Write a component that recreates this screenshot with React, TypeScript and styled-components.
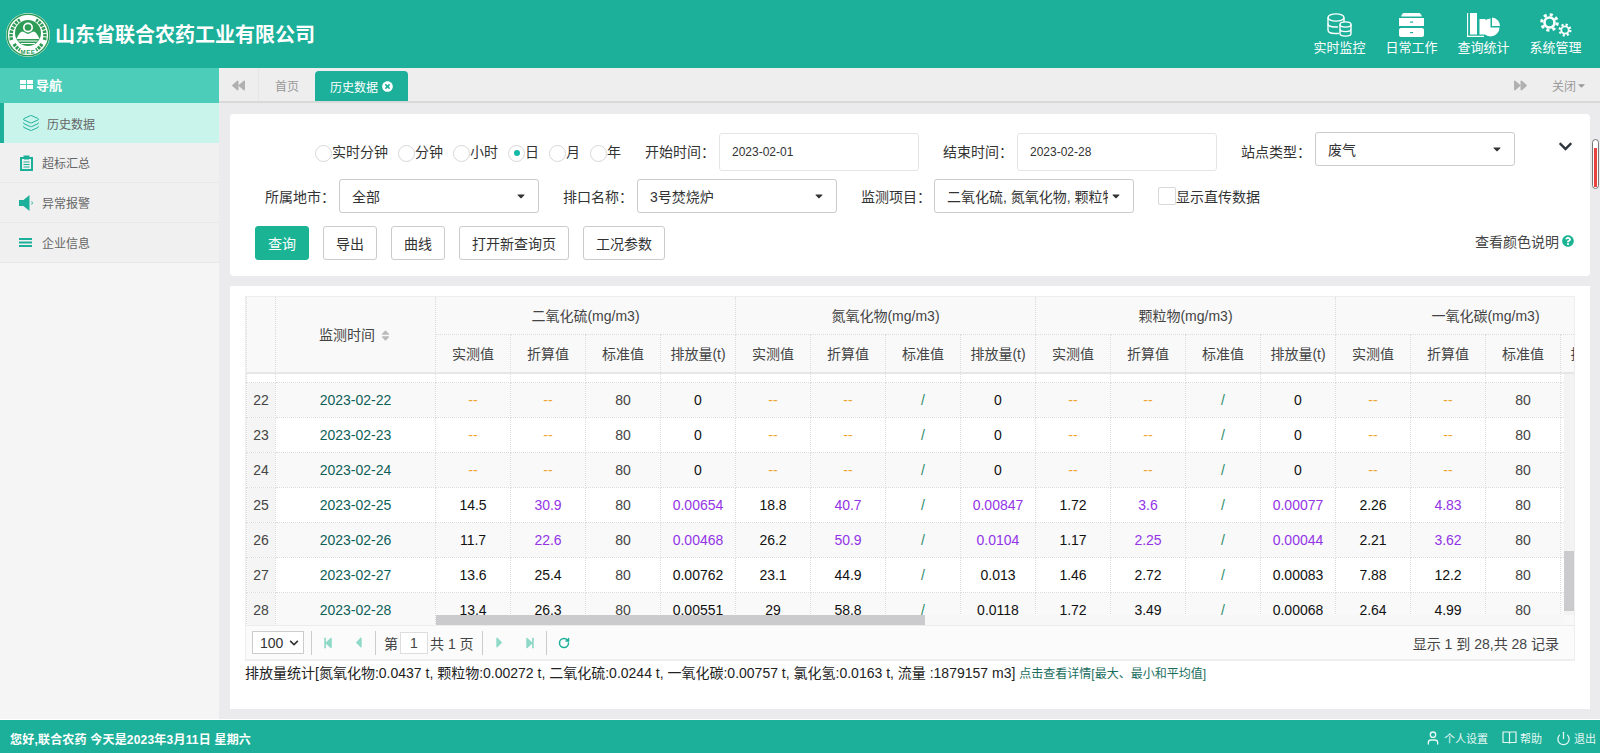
import React from 'react';
import styled, { createGlobalStyle } from 'styled-components';
import { FaBackward, FaForward, FaTimesCircle, FaCaretDown, FaChevronDown, FaQuestionCircle, FaSort, FaStepBackward, FaStepForward, FaCaretLeft, FaCaretRight } from 'react-icons/fa';
import { Layers, User, Power, RotateCw } from 'lucide-react';

const teal = '#1cb09a';
const green = '#2e9b57';
const FONT = '"Liberation Sans", "Noto Sans CJK SC", sans-serif';

const Global = createGlobalStyle`
  html, body { margin: 0; padding: 0; height: 100%; overflow: hidden; background: #ebebed; }
  body { font-family: ${FONT}; font-size: 14px; color: #333; }
  #root { height: 753px; }
  * { box-sizing: border-box; }
`;

const Page = styled.div`
  height: 753px; display: flex; flex-direction: column; position: relative;
`;
const Header = styled.header`
  height: 68px; flex: none; background: ${teal}; display: flex; align-items: center; padding: 0 18px 0 6px; color: #fff;
`;
const LogoWrap = styled.div`width: 44px; height: 44px; margin-right: 5px; margin-top: 1px;`;
const Title = styled.h1`margin: 2px 0 0; font-size: 20px; font-weight: 700; flex: 1; color: #fff; line-height: 24px;`;
const TopNav = styled.nav`display: flex; gap: 19px; margin-top: 2px;`;
const TopItem = styled.div`
  width: 53px; display: flex; flex-direction: column; align-items: center; font-size: 13px; line-height: 18px; white-space: nowrap; gap: 2px;
  svg { display: block; height: 24px; }
`;
const Body = styled.div`flex: 1; display: flex; min-height: 0;`;
const Side = styled.aside`width: 219px; flex: none; background: #f5f5f5;`;
const SideHead = styled.div`
  height: 35px; background: #4ccdb9; color: #fff; font-weight: 700; font-size: 13px; display: flex; align-items: center; padding: 0 0 2px 20px; gap: 3px;
`;
const SideItem = styled.div<{ $active?: boolean }>`
  height: 40px; display: flex; align-items: center; font-size: 12px; color: #666;
  background: ${p => (p.$active ? '#c9f4ec' : '#f0f0f0')};
  border-left: ${p => (p.$active ? `4px solid ${teal}` : 'none')};
  border-bottom: ${p => (p.$active ? 'none' : '1px solid #e8e8e8')};
  padding-left: ${p => (p.$active ? 18 : 19)}px; gap: ${p => (p.$active ? 7 : 8)}px;
  svg { color: ${teal}; flex: none; }
`;
const Main = styled.main`flex: 1; min-width: 0; display: flex; flex-direction: column;`;
const TabBar = styled.div`
  height: 35px; flex: none; background: #eeeeee; border-bottom: 2px solid #d9d9d9; display: flex; align-items: flex-end; color: #999; font-size: 12px;
`;
const TabArrow = styled.div<{ $end?: boolean }>`
  width: 40px; height: 33px; display: flex; align-items: center; justify-content: center; color: #b0b0b0; padding-top: 2px;
  border-right: ${p => (p.$end ? 'none' : '1px solid #e6e6e6')};
`;
const TabPlain = styled.div`width: 56px; height: 33px; display: flex; align-items: center; justify-content: center; font-size: 12px; color: #999; padding-top: 2px;`;
const TabActive = styled.div`
  width: 93px; height: 30px; background: ${teal}; color: #fff; border-radius: 4px 4px 0 0; display: flex; align-items: center; justify-content: center; gap: 4px;
`;
const TabGap = styled.div`flex: 1;`;
const CloseMenu = styled.div`width: 60px; height: 33px; display: flex; align-items: center; color: #999; padding: 2px 0 0 12px;`;
const Content = styled.div`flex: 1; padding: 11px 10px 10px 11px; display: flex; flex-direction: column; gap: 10px; min-height: 0;`;
const FilterCard = styled.section`
  height: 162px; flex: none; background: #fff; border-radius: 4px; position: relative; padding: 19px 25px 0 25px;
`;
const Row = styled.div`display: flex; align-items: center;`;
const Row1 = styled(Row)`height: 38px; padding-left: 60px;`;
const Row2 = styled(Row)`height: 34px; margin-top: 8px; padding-left: 10px;`;
const Row3 = styled(Row)`height: 34px; margin-top: 13px; gap: 14px;`;
const RadioLabel = styled.label`display: flex; align-items: center; font-size: 14px; margin: -3px 10px 0 0; color: #333; height: 20px;`;
const RadioDot = styled.span<{ $on?: boolean }>`
  width: 17px; height: 17px; border-radius: 50%; border: 1px solid #d8d8d8; background: #fff; display: flex; align-items: center; justify-content: center; flex: none; margin-top: 5px;
  &::after { content: ''; width: 6px; height: 6px; border-radius: 50%; background: ${p => (p.$on ? '#16b8a8' : 'transparent')}; }
`;
const FieldLabel = styled.span<{ $ml?: number; $w?: number; $up?: boolean }>`
  font-size: 14px; color: #333; white-space: nowrap; width: ${p => p.$w ?? 74}px; flex: none; margin-left: ${p => p.$ml ?? 0}px;
  margin-top: ${p => (p.$up ? -3 : 0)}px;
`;
const DateInput = styled.div`
  width: 200px; height: 38px; border: 1px solid #e5e5e5; border-radius: 3px; display: flex; align-items: center; padding-left: 12px; font-size: 12px; color: #333; flex: none;
`;
const Select = styled.div<{ $raised?: boolean }>`
  width: 200px; height: 34px; border: 1px solid #ccc; border-radius: 3px; display: flex; align-items: center; padding: 0 12px; font-size: 14px; color: #333; flex: none; white-space: nowrap; overflow: hidden;
  margin-bottom: ${p => (p.$raised ? 6 : 0)}px;
  svg { flex: none; margin-right: -1px; color: #333; }
  span { overflow: hidden; flex: 1; min-width: 0; margin-right: 2px; }
`;
const Check = styled.span`width: 18px; height: 18px; border: 1px solid #d8d8d8; border-radius: 2px; background: #fff; flex: none; margin-left: 24px;`;
const Btn = styled.button<{ $primary?: boolean; $w: number }>`
  width: ${p => p.$w}px; height: 34px; border-radius: 3px; font-family: ${FONT}; font-size: 14px; padding: 0; cursor: pointer;
  background: ${p => (p.$primary ? '#1ab394' : '#fff')}; color: ${p => (p.$primary ? '#fff' : '#333')}; border: 1px solid ${p => (p.$primary ? '#1ab394' : '#ccc')};
`;
const ColorNote = styled.div`
  margin-left: auto; font-size: 14px; color: #444; display: flex; align-items: center; gap: 3px; margin-right: -9px; margin-top: -4px;
  svg { color: #1ab394; }
`;
const Collapse = styled.div`position: absolute; right: 17px; top: 25px; color: #2f3640; line-height: 0;`;
const TableCard = styled.section`flex: 1; background: #fff; padding: 10px 15px 0 15px; min-height: 0;`;
const Grid = styled.div`width: 1330px; border: 1px solid #eeeeee; border-bottom: none; overflow: hidden; position: relative;`;
const HeadBox = styled.div`background: #f9f9f9; border-bottom: 2px solid #e6e6e6; overflow: hidden; height: 77px;`;
const DataTable = styled.table`
  border-collapse: collapse; table-layout: fixed; width: 1389px; font-size: 14px;
  th, td { padding: 0; text-align: center; border: 1px dotted #dcdcdc; white-space: nowrap; overflow: hidden; }
  th { font-weight: 400; color: #444; background: #f9f9f9; }
`;
const HeadTop = styled.tr`height: 37px; th { height: 37px; border-top: none; }`;
const HeadSub = styled.tr`height: 38px; th { height: 38px; border-bottom: none; }`;
const BodyBox = styled.div`height: 251px; overflow: hidden; position: relative; background: #fff;`;
const Tr = styled.tr<{ $alt?: boolean }>`
  height: 35px; background: ${p => (p.$alt ? '#f9f9f9' : '#fff')};
`;
const Spacer = styled.tr`height: 8px; background: #fff; td { height: 8px; border-top: none; }`;
const NumCell = styled.td`background: #f5f5f5; color: #444;`;
const DateCell = styled.td`color: #0e5f58;`;
const Cell = styled.td<{ $c?: string }>`color: ${p => p.$c ?? '#111'};`;
const HTrack = styled.div`position: absolute; left: 190px; right: 10px; bottom: 0; height: 10px; background: #f7f7f7;`;
const HThumb = styled.div`width: 489px; height: 10px; background: #cbcbcd;`;
const VTrack = styled.div`position: absolute; top: 0; right: 0; bottom: 10px; width: 10px; background: #f3f3f3; padding-top: 177px;`;
const VThumb = styled.div`width: 10px; height: 60px; background: #cbcbcd;`;
const Pager = styled.div`
  height: 36px; background: #fbfbfb; border-top: 1px solid #ececec; border-bottom: 2px solid #eeeeee; display: flex; align-items: center; padding: 0 15px 0 6px; font-size: 14px; color: #444;
`;
const PageSize = styled.div`
  width: 52px; height: 23px; border: 1px solid #ccc; background: #fff; display: flex; align-items: center; justify-content: space-between; padding: 0 4px 0 7px; font-size: 14px; color: #333; margin-right: 5px; flex: none;
`;
const Sep = styled.span`width: 1px; height: 24px; background: #ccc; margin: 0 1.5px; flex: none;`;
const PagerBtn = styled.span`
  width: 30px; display: flex; justify-content: center; color: #8fd9c9; flex: none;
`;
const PageText = styled.span`white-space: nowrap; display: flex; align-items: center; gap: 2px; margin: 0 7px;`;
const PageInput = styled.span`width: 28px; height: 22px; border: 1px solid #ddd; background: #fff; display: inline-flex; align-items: center; justify-content: center;`;
const PagerInfo = styled.span`margin-left: auto; font-size: 14px; color: #444;`;
const Stats = styled.div`font-size: 14px; color: #222; line-height: 20px; margin-top: 2px; white-space: nowrap; display: flex; align-items: baseline; gap: 4px;`;
const StatsLink = styled.span`font-size: 12px; color: #1a6e5e;`;
const Footer = styled.footer`
  height: 34px; flex: none; background: ${teal}; border-top: 1px solid #fff; color: #fff; display: flex; align-items: center; padding: 3px 4px 0 10px; font-size: 11px;
`;
const Greeting = styled.span`font-weight: 700; flex: 1; font-size: 12px; letter-spacing: .2px;`;
const FootLink = styled.span`display: flex; align-items: center; gap: 3px; margin-left: 14px; color: #e6f7f4;`;
const PageBar = styled.div`
  position: absolute; left: 1592px; top: 139px; width: 7px; height: 50px; border: 1.5px solid #777; border-radius: 4px; background: #fff; padding: 8px 1px 1px;
  &::after { content: ''; display: block; height: 100%; background: #e8423f; }
`;

const Logo = () => (
  <svg viewBox="0 0 44 44" width="44" height="44">
    <circle cx="22" cy="22" r="22" fill="#fff" />
    <circle cx="22" cy="22" r="20.800" fill="none" stroke={green} strokeWidth="1.500" />
    <path d="M5.500 27C3.500 18 8 10 14 7M38.500 27C40.500 18 36 10 30 7M8 31c2 3 4 5 6 6M36 31c-2 3-4 5-6 6" fill="none" stroke={green} strokeWidth="3.500" strokeDasharray="2.500 1" />
    <circle cx="22" cy="20" r="13" fill={green} />
    <circle cx="22" cy="14.500" r="5" fill="#fff" />
    <circle cx="22" cy="14.500" r="3.300" fill={green} />
    <path d="M10.500 26c2-5 4-7.500 6-7.500 2 0 3.500 2.500 5.500 2.500s3.500-2.500 5.500-2.500c2 0 4 2.500 6 7.500z" fill="#fff" />
    <path d="M12.500 28h19M15 30.500h14" stroke="#fff" strokeWidth="1" />
    <text x="22" y="41" textAnchor="middle" fontSize="6" fontWeight="700" fill={green} fontFamily={FONT} letterSpacing="0.600">MEE</text>
  </svg>
);

const NavGrid = () => (
  <svg width="13" height="9" viewBox="0 0 13 9" fill="#fff">
    <rect x="0" y="0" width="6" height="4" /><rect x="7" y="0" width="6" height="4" />
    <rect x="0" y="5" width="6" height="4" /><rect x="7" y="5" width="6" height="4" />
  </svg>
);

const DbIcon = () => (
  <svg viewBox="0 0 25 24" width="25" height="24" fill="none" stroke="#fff" strokeWidth="1.400">
    <path d="M12 20.500H8c-4 0-7-1.400-7-3.500V4.500" />
    <ellipse cx="9" cy="4.500" rx="8" ry="3.600" />
    <path d="M17 4.500V9M1 10.500c0 2 3 3.500 7 3.500h3" />
    <ellipse cx="18.500" cy="11.500" rx="5.500" ry="2.600" />
    <path d="M13 11.500V20.500c0 1.500 2.500 2.600 5.500 2.600s5.500-1.100 5.500-2.600V11.500M13 16c0 1.500 2.500 2.600 5.500 2.600s5.500-1.100 5.500-2.600" />
  </svg>
);
const DrawerIcon = () => (
  <svg viewBox="0 0 25 24" width="25" height="24">
    <path d="M5 0h15c1.200 0 2.400 1.300 2.800 3.500H2.200C2.600 1.300 3.800 0 5 0z" fill="#fff" />
    <path d="M0 5h25v8H0zM2 15h21c1.100 0 2 .9 2 2v5c0 1.100-.9 2-2 2H2c-1.100 0-2-.9-2-2v-5c0-1.100.9-2 2-2z" fill="#fff" />
    <rect x="11" y="8.500" width="3" height="1.200" fill={teal} /><rect x="11" y="19" width="3" height="1.200" fill={teal} />
  </svg>
);
const ChartIcon = () => (
  <svg viewBox="0 0 33 24" width="33" height="24">
    <path d="M.6 0v23.400H17" fill="none" stroke="#fff" strokeWidth="1.100" />
    <rect x="3" y="0" width="7" height="21.500" fill="#fff" />
    <rect x="12.500" y="6" width="6" height="15.500" fill="#fff" />
    <path d="M23.500 5.500V14.500h9A9 9 0 1 1 23.500 5.500z" fill="#fff" />
    <path d="M25 4.500a8.500 8.500 0 0 1 8 8.500h-8z" fill="#fff" />
  </svg>
);
const Gear = ({ cx, cy, ring, w, teeth, tw }: { cx: number; cy: number; ring: number; w: number; teeth: number; tw: number }) => {
  const seg = (2 * Math.PI * teeth) / 8;
  return (
    <g fill="none" stroke="#fff">
      <circle cx={cx} cy={cy} r={ring} strokeWidth={w} />
      <circle cx={cx} cy={cy} r={teeth} strokeWidth={tw} strokeDasharray={`${seg * 0.5} ${seg * 0.5}`} />
    </g>
  );
};
const GearsIcon = () => (
  <svg viewBox="0 0 32 24" width="32" height="24">
    <Gear cx={9.500} cy={9.500} ring={5} w={2.600} teeth={7.800} tw={3} />
    <Gear cx={25} cy={17} ring={3.700} w={1.800} teeth={5.400} tw={2.200} />
  </svg>
);
const Clip = () => (
  <svg width="15" height="16" viewBox="0 0 15 16">
    <path d="M1 2h3.500V.5h6V2H14v14H1z" fill={teal} />
    <path d="M3 4h9v10H3z" fill="#f0f0f0" />
    <path d="M5 1.500h5v3H5z" fill={teal} />
    <path d="M4.500 7h6M4.500 9.500h6M4.500 12h6" stroke={teal} strokeWidth="1" />
  </svg>
);
const Horn = () => (
  <svg width="15" height="16" viewBox="0 0 15 16">
    <path d="M0 5h4.500L10.500 0v16L4.500 11H0z" fill={teal} />
    <path d="M12.700 6.500c.8 1 .8 2 0 3" fill="none" stroke={teal} strokeWidth="1" />
  </svg>
);
const Lines = () => (
  <svg width="15" height="9" viewBox="0 0 15 9" fill={teal}>
    <rect x="0" y="0" width="13" height="2" /><rect x="0" y="3.500" width="13" height="2" /><rect x="0" y="7" width="13" height="2" />
  </svg>
);
const Book = () => (
  <svg width="15" height="14" viewBox="0 0 15 14" fill="none" stroke="#e6f7f4" strokeWidth="1.200">
    <path d="M1 1h5.500c.6 0 1 .3 1 1 0-.7.4-1 1-1H14v10.500H8.500c-.6 0-1 .3-1 1 0-.7-.4-1-1-1H1zM7.500 2v10" />
  </svg>
);

type C = [string, string?];
const P = '#9334e6';
const D = '#f0a52e';
const dash: C = ['--', D];
const G: C = ['/', '#2e8b6b'];
const S: C = ['80', '#444'];
const blank = (): C[] => [dash, dash, S, ['0'], dash, dash, G, ['0'], dash, dash, G, ['0'], dash, dash, S, ['']];
const rows: { n: number; date: string; cells: C[] }[] = [
  { n: 22, date: '2023-02-22', cells: blank() },
  { n: 23, date: '2023-02-23', cells: blank() },
  { n: 24, date: '2023-02-24', cells: blank() },
  { n: 25, date: '2023-02-25', cells: [['14.5'], ['30.9', P], S, ['0.00654', P], ['18.8'], ['40.7', P], G, ['0.00847', P], ['1.72'], ['3.6', P], G, ['0.00077', P], ['2.26'], ['4.83', P], S, ['']] },
  { n: 26, date: '2023-02-26', cells: [['11.7'], ['22.6', P], S, ['0.00468', P], ['26.2'], ['50.9', P], G, ['0.0104', P], ['1.17'], ['2.25', P], G, ['0.00044', P], ['2.21'], ['3.62', P], S, ['']] },
  { n: 27, date: '2023-02-27', cells: [['13.6'], ['25.4'], S, ['0.00762'], ['23.1'], ['44.9'], G, ['0.013'], ['1.46'], ['2.72'], G, ['0.00083'], ['7.88'], ['12.2'], S, ['']] },
  { n: 28, date: '2023-02-28', cells: [['13.4'], ['26.3'], S, ['0.00551'], ['29'], ['58.8'], G, ['0.0118'], ['1.72'], ['3.49'], G, ['0.00068'], ['2.64'], ['4.99'], S, ['']] },
];
const groups = ['二氧化硫(mg/m3)', '氮氧化物(mg/m3)', '颗粒物(mg/m3)', '一氧化碳(mg/m3)'];
const subs = ['实测值', '折算值', '标准值', '排放量(t)'];

const Cols = () => (
  <colgroup>
    <col style={{ width: 29 }} />
    <col style={{ width: 160 }} />
    {Array.from({ length: 16 }).map((_, i) => <col key={i} style={{ width: 75 }} />)}
  </colgroup>
);

const Radio = ({ label, on }: { label: string; on?: boolean }) => (
  <RadioLabel><RadioDot $on={on} />{label}</RadioLabel>
);

export default function App() {
  return (
    <Page>
      <Global />
      <Header>
        <LogoWrap><Logo /></LogoWrap>
        <Title>山东省联合农药工业有限公司</Title>
        <TopNav>
          <TopItem><DbIcon />实时监控</TopItem>
          <TopItem><DrawerIcon />日常工作</TopItem>
          <TopItem><ChartIcon />查询统计</TopItem>
          <TopItem><GearsIcon />系统管理</TopItem>
        </TopNav>
      </Header>
      <Body>
        <Side>
          <SideHead><NavGrid />导航</SideHead>
          <SideItem $active><Layers size={18} strokeWidth={1.300} />历史数据</SideItem>
          <SideItem><Clip />超标汇总</SideItem>
          <SideItem><Horn />异常报警</SideItem>
          <SideItem><Lines />企业信息</SideItem>
        </Side>
        <Main>
          <TabBar>
            <TabArrow><FaBackward size={13} /></TabArrow>
            <TabPlain>首页</TabPlain>
            <TabActive>历史数据<FaTimesCircle size={11} /></TabActive>
            <TabGap />
            <TabArrow $end><FaForward size={13} /></TabArrow>
            <CloseMenu>关闭<FaCaretDown size={11} /></CloseMenu>
          </TabBar>
          <Content>
            <FilterCard>
              <Row1>
                <Radio label="实时分钟" />
                <Radio label="分钟" />
                <Radio label="小时" />
                <Radio label="日" on />
                <Radio label="月" />
                <Radio label="年" />
                <FieldLabel $ml={14} $up>开始时间：</FieldLabel>
                <DateInput>2023-02-01</DateInput>
                <FieldLabel $ml={24} $up>结束时间：</FieldLabel>
                <DateInput>2023-02-28</DateInput>
                <FieldLabel $ml={24} $up>站点类型：</FieldLabel>
                <Select $raised><span>废气</span><FaCaretDown size={12} /></Select>
              </Row1>
              <Row2>
                <FieldLabel>所属地市：</FieldLabel>
                <Select><span>全部</span><FaCaretDown size={12} /></Select>
                <FieldLabel $ml={24}>排口名称：</FieldLabel>
                <Select><span>3号焚烧炉</span><FaCaretDown size={12} /></Select>
                <FieldLabel $ml={24} $w={73}>监测项目：</FieldLabel>
                <Select><span>二氧化硫, 氮氧化物, 颗粒物</span><FaCaretDown size={12} /></Select>
                <Check />
                <span>显示直传数据</span>
              </Row2>
              <Row3>
                <Btn $primary $w={54}>查询</Btn>
                <Btn $w={54}>导出</Btn>
                <Btn $w={54}>曲线</Btn>
                <Btn $w={110}>打开新查询页</Btn>
                <Btn $w={82}>工况参数</Btn>
                <ColorNote>查看颜色说明<FaQuestionCircle size={12} /></ColorNote>
              </Row3>
              <Collapse><FaChevronDown size={15} /></Collapse>
            </FilterCard>
            <TableCard>
              <Grid>
                <HeadBox>
                  <DataTable>
                    <Cols />
                    <thead>
                      <HeadTop>
                        <th rowSpan={2} />
                        <th rowSpan={2}>监测时间 <FaSort size={13} color="#bbb" style={{ verticalAlign: -2 }} /></th>
                        {groups.map(g => <th key={g} colSpan={4}>{g}</th>)}
                      </HeadTop>
                      <HeadSub>
                        {groups.flatMap(g => subs.map(s => <th key={g + s}>{s}</th>))}
                      </HeadSub>
                    </thead>
                  </DataTable>
                </HeadBox>
                <BodyBox>
                  <DataTable>
                    <Cols />
                    <tbody>
                      <Spacer><td /><td />{Array.from({ length: 16 }).map((_, i) => <td key={i} />)}</Spacer>
                      {rows.map(r => (
                        <Tr key={r.n} $alt={r.n % 2 === 0}>
                          <NumCell>{r.n}</NumCell>
                          <DateCell>{r.date}</DateCell>
                          {r.cells.map((c, i) => <Cell key={i} $c={c[1]}>{c[0]}</Cell>)}
                        </Tr>
                      ))}
                    </tbody>
                  </DataTable>
                  <HTrack><HThumb /></HTrack>
                  <VTrack><VThumb /></VTrack>
                </BodyBox>
                <Pager>
                  <PageSize>100<FaChevronDown size={10} color="#333" /></PageSize>
                  <Sep />
                  <PagerBtn><FaStepBackward size={12} /></PagerBtn>
                  <PagerBtn><FaCaretLeft size={17} /></PagerBtn>
                  <Sep />
                  <PageText>第<PageInput>1</PageInput>共 1 页</PageText>
                  <Sep />
                  <PagerBtn><FaCaretRight size={17} /></PagerBtn>
                  <PagerBtn><FaStepForward size={12} /></PagerBtn>
                  <Sep />
                  <PagerBtn><RotateCw size={12} strokeWidth={3} color="#1cb09a" /></PagerBtn>
                  <PagerInfo>显示 1 到 28,共 28 记录</PagerInfo>
                </Pager>
              </Grid>
              <Stats>排放量统计[氮氧化物:0.0437 t, 颗粒物:0.00272 t, 二氧化硫:0.0244 t, 一氧化碳:0.00757 t, 氯化氢:0.0163 t, 流量 :1879157 m3]<StatsLink>点击查看详情[最大、最小和平均值]</StatsLink></Stats>
            </TableCard>
          </Content>
        </Main>
      </Body>
      <Footer>
        <Greeting>您好,联合农药 今天是2023年3月11日 星期六</Greeting>
        <FootLink><User size={16} />个人设置</FootLink>
        <FootLink><Book />帮助</FootLink>
        <FootLink><Power size={15} />退出</FootLink>
      </Footer>
      <PageBar />
    </Page>
  );
}
